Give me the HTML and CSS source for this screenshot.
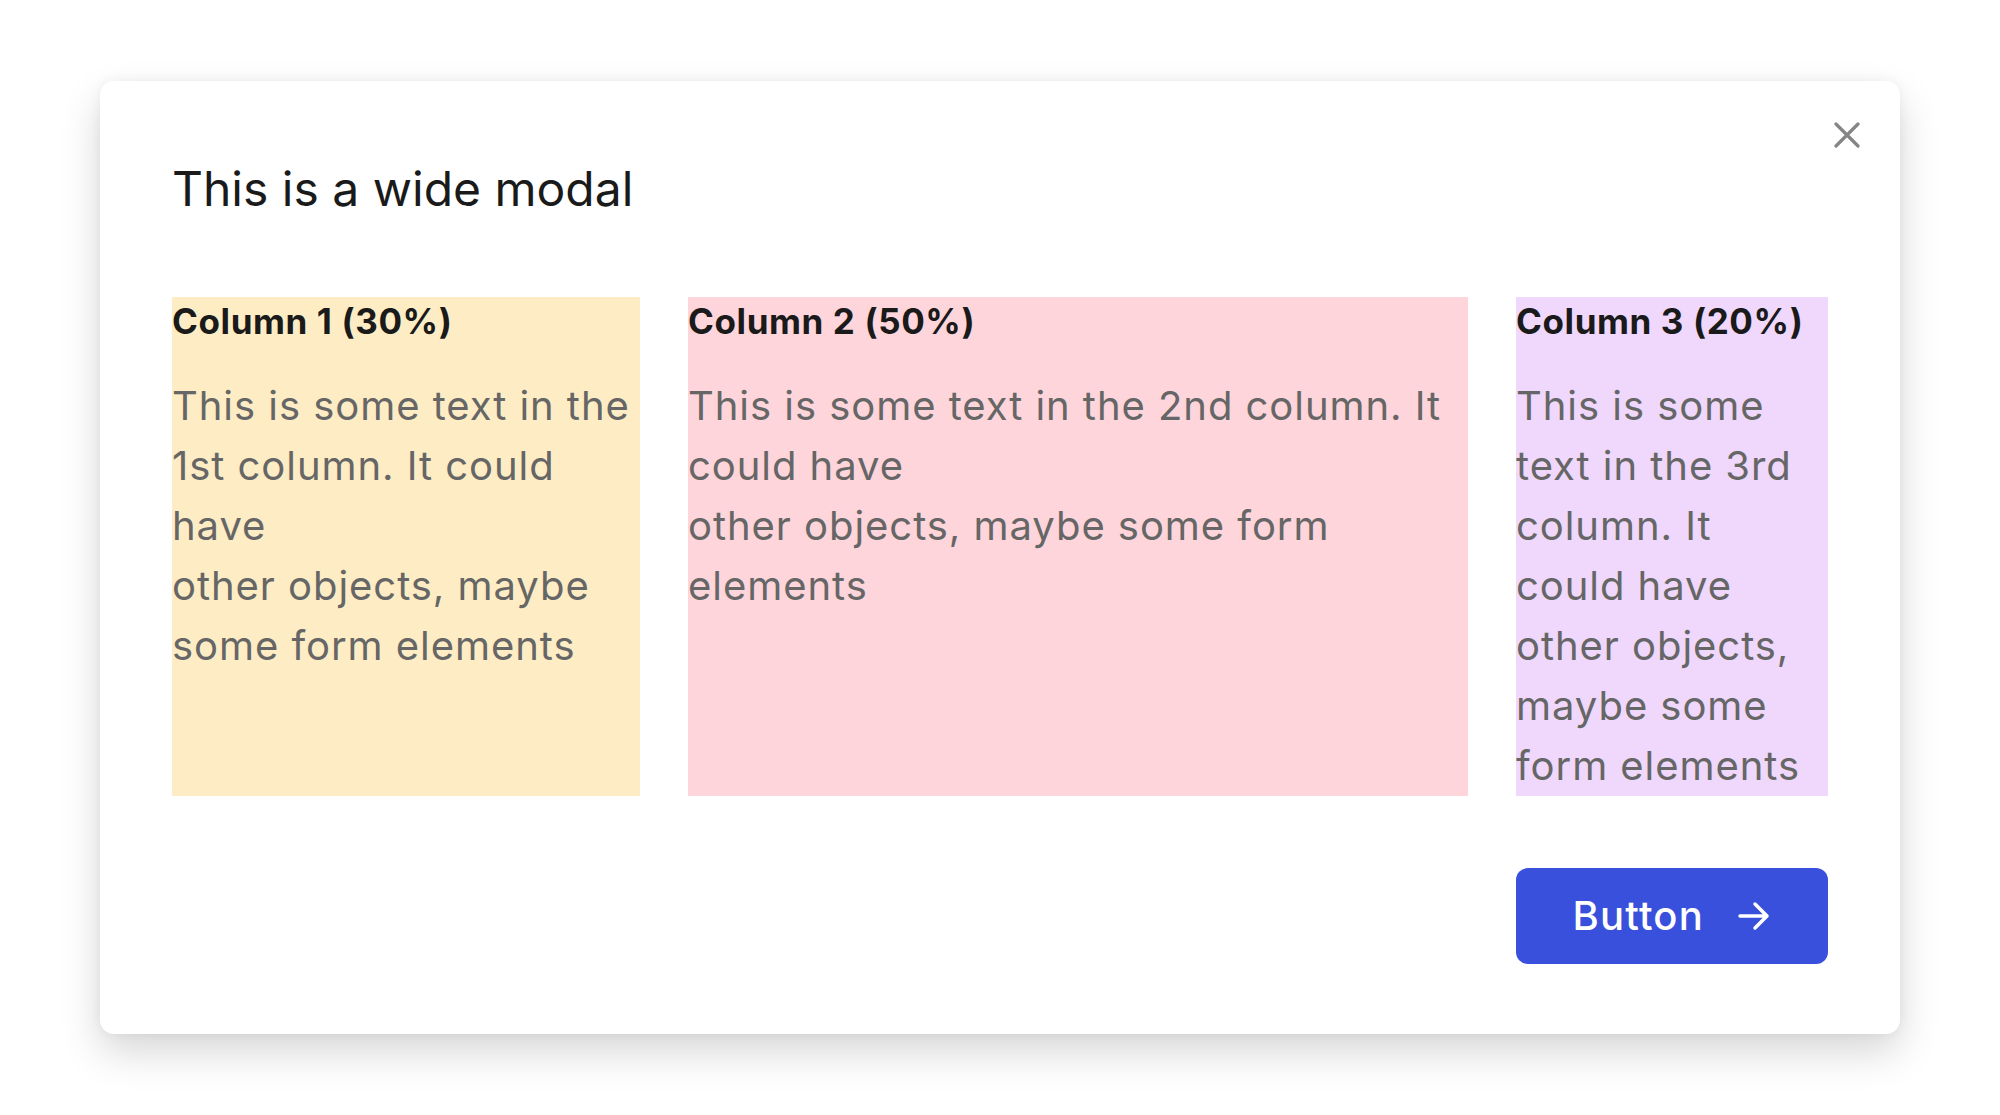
FILE: index.html
```html
<!DOCTYPE html>
<html lang="en">
<head>
<meta charset="utf-8">
<title>Wide modal</title>
<link rel="stylesheet" href="styles.css">
</head>
<body>
<div class="stage">
  <div class="modal" role="dialog" aria-labelledby="modal-title">
    <button class="close" aria-label="Close">
      <svg viewBox="0 0 26 26" width="26" height="26"><path d="M2 2 L24 24 M24 2 L2 24" /></svg>
    </button>
    <h1 class="title" id="modal-title">This is a wide modal</h1>
    <div class="columns">
      <section class="col col-1">
        <h2 class="col-title">Column 1 (30%)</h2>
        <p class="col-text">This is some text in the 1st column. It could have<br>other objects, maybe some form elements</p>
      </section>
      <section class="col col-2">
        <h2 class="col-title">Column 2 (50%)</h2>
        <p class="col-text">This is some text in the 2nd column. It could have<br>other objects, maybe some form elements</p>
      </section>
      <section class="col col-3">
        <h2 class="col-title">Column 3 (20%)</h2>
        <p class="col-text">This is some text in the 3rd column. It could have<br>other objects, maybe some form elements</p>
      </section>
    </div>
    <div class="footer">
      <button class="primary">
        <span>Button</span>
        <svg viewBox="0 0 40 40" width="40" height="40"><path d="M6 20 H33 M21 8 L33 20 L21 32" /></svg>
      </button>
    </div>
  </div>
</div>
</body>
</html>
```
FILE: styles.css
```css
* { box-sizing: border-box; }
html, body { margin: 0; padding: 0; background: #ffffff; }
body { font-family: Inter, "Noto Sans", sans-serif; }
.stage {
  width: 2000px;
  height: 1115px;
  display: flex;
  align-items: center;
  justify-content: center;
}
.modal {
  position: relative;
  width: 1800px;
  background: #ffffff;
  border-radius: 14px;
  padding: 72px 72px 70px;
  display: flex;
  flex-direction: column;
  gap: 72px;
  box-shadow: 0 18px 40px rgba(0,0,0,0.16), 0 0 12px rgba(0,0,0,0.05);
}
.close {
  position: absolute;
  top: 30px;
  right: 29px;
  width: 48px;
  height: 48px;
  border: 0;
  background: transparent;
  padding: 0;
  display: flex;
  align-items: center;
  justify-content: center;
}
.close svg path { stroke: #858585; stroke-width: 3.2; stroke-linecap: round; fill: none; }
.title {
  margin: 0;
  font-size: 48px;
  line-height: 72px;
  font-weight: 400;
  color: #1a1a1a;
}
.columns {
  display: grid;
  grid-template-columns: 3fr 5fr 2fr;
  column-gap: 48px;
}
.col-1 { background: #feedc4; }
.col-2 { background: #fed5da; }
.col-3 { background: #efd8fc; }
.col-title {
  margin: 0 0 31px;
  font-size: 35px;
  line-height: 48px;
  font-weight: 700;
  letter-spacing: 0.6px;
  color: #1a1a1a;
}
.col-text {
  margin: 0;
  font-size: 40px;
  line-height: 60px;
  letter-spacing: 0.95px;
  color: #666666;
}
.footer { display: flex; justify-content: flex-end; }
.primary {
  display: flex;
  align-items: center;
  gap: 30px;
  padding: 18px 54px 18px 57px;
  border: 0;
  border-radius: 12px;
  background: #3950dc;
  color: #ffffff;
  font-family: Inter, "Noto Sans", sans-serif;
  font-size: 40px;
  line-height: 60px;
  font-weight: 500;
  letter-spacing: 1.2px;
}
.primary svg path { stroke: #ffffff; stroke-width: 3.5; stroke-linecap: round; stroke-linejoin: round; fill: none; }
```
